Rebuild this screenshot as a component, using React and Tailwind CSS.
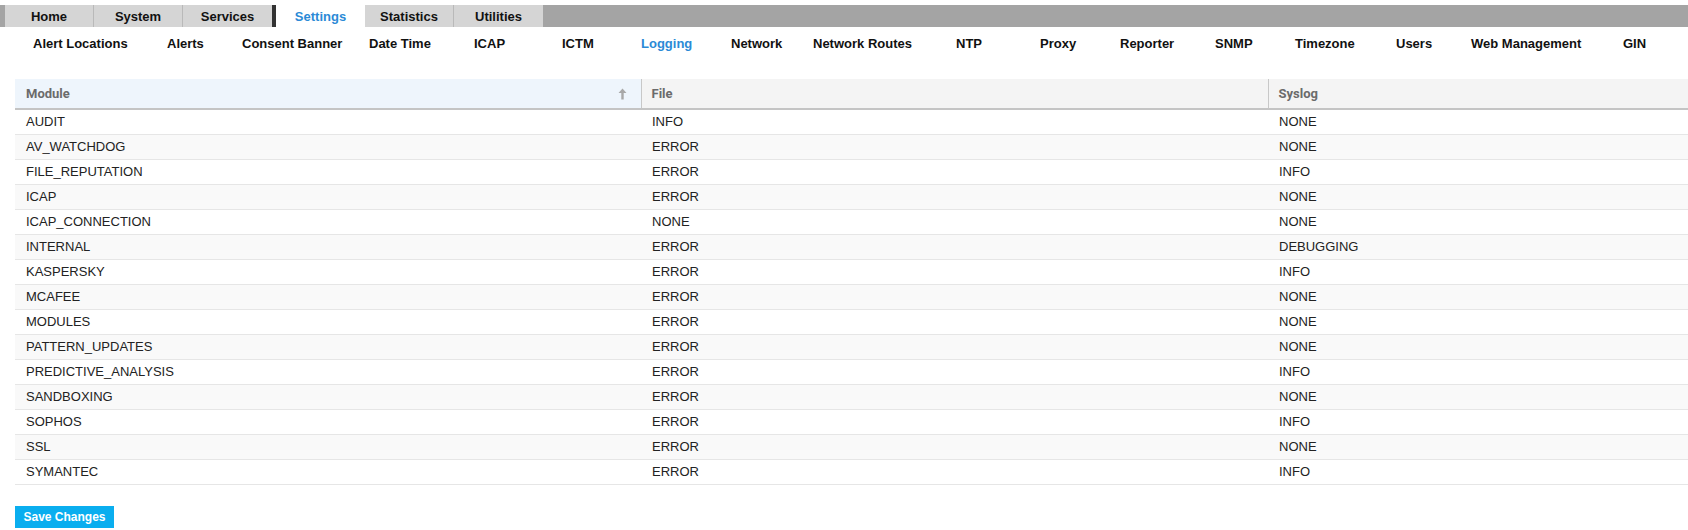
import React, { useState } from 'react';

const tabs = [
    { name: 'Home', cls: 'w-[89px] border-r border-[#b9b9b9]' },
    { name: 'System', cls: 'w-[89px] border-r border-[#b9b9b9]' },
    { name: 'Services', cls: 'w-[89px]' },
    { name: 'Settings', cls: 'w-[93px] border-l-4 border-[#333333]', active: true },
    { name: 'Statistics', cls: 'w-[89px] border-r border-[#b9b9b9]' },
    { name: 'Utilities', cls: 'w-[89px]' },
];

// left-aligned cells, widths taken from where each label starts
const subNav = [
    { name: 'Alert Locations', w: 'w-[134px]' },
    { name: 'Alerts', w: 'w-[75px]' },
    { name: 'Consent Banner', w: 'w-[127px]' },
    { name: 'Date Time', w: 'w-[105px]' },
    { name: 'ICAP', w: 'w-[88px]' },
    { name: 'ICTM', w: 'w-[79px]' },
    { name: 'Logging', w: 'w-[90px]', active: true },
    { name: 'Network', w: 'w-[82px]' },
    { name: 'Network Routes', w: 'w-[143px]' },
    { name: 'NTP', w: 'w-[84px]' },
    { name: 'Proxy', w: 'w-[80px]' },
    { name: 'Reporter', w: 'w-[95px]' },
    { name: 'SNMP', w: 'w-[80px]' },
    { name: 'Timezone', w: 'w-[101px]' },
    { name: 'Users', w: 'w-[75px]' },
    { name: 'Web Management', w: 'w-[152px]' },
    { name: 'GIN', w: 'w-[50px]' },
];

const modules = [
    ['AUDIT', 'INFO', 'NONE'],
    ['AV_WATCHDOG', 'ERROR', 'NONE'],
    ['FILE_REPUTATION', 'ERROR', 'INFO'],
    ['ICAP', 'ERROR', 'NONE'],
    ['ICAP_CONNECTION', 'NONE', 'NONE'],
    ['INTERNAL', 'ERROR', 'DEBUGGING'],
    ['KASPERSKY', 'ERROR', 'INFO'],
    ['MCAFEE', 'ERROR', 'NONE'],
    ['MODULES', 'ERROR', 'NONE'],
    ['PATTERN_UPDATES', 'ERROR', 'NONE'],
    ['PREDICTIVE_ANALYSIS', 'ERROR', 'INFO'],
    ['SANDBOXING', 'ERROR', 'NONE'],
    ['SOPHOS', 'ERROR', 'INFO'],
    ['SSL', 'ERROR', 'NONE'],
    ['SYMANTEC', 'ERROR', 'INFO'],
];

const SortUp = () => (
    <svg width="9" height="12" viewBox="0 0 9 12" className="text-[#a8a8a8]">
        <path d="M4.5 0.5 L8.5 5 H5.7 V11.5 H3.3 V5 H0.5 Z" fill="currentColor" />
    </svg>
);

const App = () => {
    const [rows] = useState(modules);

    return (
        <div className="min-h-screen bg-white pt-[5px] font-['Liberation_Sans',Arial,sans-serif] overflow-hidden">
            {/* top tabs */}
            <div className="flex h-[22px] bg-[#a4a4a4] pl-[5px]">
                {tabs.map(t => (
                    <div
                        key={t.name}
                        className={`${t.cls} flex items-center justify-center pt-[1px] text-[13px] font-bold cursor-pointer ${t.active ? 'bg-white text-[#2b8ad6]' : 'bg-[#d5d5d5] text-[#111]'}`}
                    >
                        {t.name}
                    </div>
                ))}
            </div>

            {/* settings sub nav */}
            <div className="flex h-[24px] mt-[5px] pl-[33px] overflow-hidden">
                {subNav.map(s => (
                    <div
                        key={s.name}
                        className={`${s.w} shrink-0 flex items-center whitespace-nowrap text-[13px] font-bold cursor-pointer ${s.active ? 'text-[#2b8ad6]' : 'text-[#111]'}`}
                    >
                        {s.name}
                    </div>
                ))}
            </div>

            {/* logging table */}
            <div className="mt-[23px] pl-[15px]">
                <table className="w-full table-fixed border-collapse">
                    <colgroup>
                        <col className="w-[626px]" />
                        <col className="w-[627px]" />
                        <col />
                    </colgroup>
                    <thead>
                        <tr className="h-[30px] border-b-2 border-[#c4c4c4] font-['Roboto',sans-serif] text-[13px] font-bold text-[#6b6b6b]">
                            <th className="bg-[#eef5fc] px-[11px] text-left font-bold">
                                <div className="flex items-center justify-between pr-[3px]">
                                    <span>Module</span>
                                    <SortUp />
                                </div>
                            </th>
                            <th className="bg-[#f4f4f4] border-l border-[#c8c8c8] px-[10px] text-left font-bold">File</th>
                            <th className="bg-[#f4f4f4] border-l border-[#c8c8c8] px-[10px] text-left font-bold">Syslog</th>
                        </tr>
                    </thead>
                    <tbody>
                        {rows.map((r, i) => (
                            <tr key={r[0]} className={`h-[25px] border-b border-[#e6e6e6] text-[13px] text-[#222] ${i % 2 === 1 ? 'bg-[#f9f9f9]' : 'bg-white'}`}>
                                <td className="px-[11px]">{r[0]}</td>
                                <td className="px-[11px]">{r[1]}</td>
                                <td className="px-[11px]">{r[2]}</td>
                            </tr>
                        ))}
                    </tbody>
                </table>
            </div>

            <div className="pl-[15px] mt-[19px]">
                <button className="h-[22px] w-[99px] bg-[#0aaeef] text-white text-[12px] font-bold">
                    Save Changes
                </button>
            </div>
        </div>
    );
};

export default App;
